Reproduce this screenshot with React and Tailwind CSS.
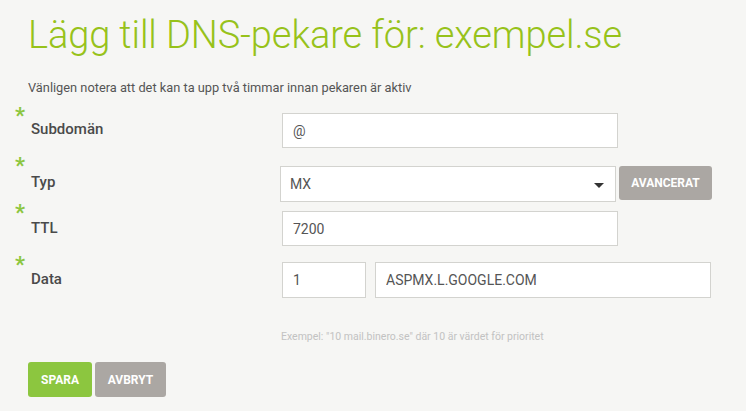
import { useState } from 'react'

const font = { fontFamily: 'Roboto, "Noto Sans", sans-serif' }

function Star() {
  return <div className="h-[9px] text-[22px] leading-[18px] font-bold text-[#8cc63f]">*</div>
}

function FieldRow({ label, top, labelTop, controlTop, children }) {
  return (
    <div className="flex items-start" style={{ marginTop: top }}>
      <div className="w-[267px] shrink-0">
        <Star />
        <div
          className="pl-[16px] text-[15px] leading-[20px] font-medium text-[#4a4a4a]"
          style={{ marginTop: labelTop }}
        >
          {label}
        </div>
      </div>
      <div className="flex items-start gap-[9px]" style={{ marginTop: controlTop }}>
        {children}
      </div>
    </div>
  )
}

const inputCls =
  'h-[35px] border border-[#d3d3cf] bg-white px-[10px] text-[14px] text-[#555] outline-none'

export default function App() {
  const [sub, setSub] = useState('@')
  const [ttl, setTtl] = useState('7200')
  const [prio, setPrio] = useState('1')
  const [data, setData] = useState('ASPMX.L.GOOGLE.COM')

  return (
    <div className="min-h-[411px] w-[746px] bg-[#f6f6f4] pl-[15px] pt-[13px]" style={font}>
      <h1 className="pl-[13px] text-[38px] leading-[44px] font-light tracking-[-0.1px] text-[#97c21a]">
        Lägg till DNS-pekare för: exempel.se
      </h1>
      <p className="mt-[23px] pl-[13px] text-[12.8px] leading-[16px] text-[#555]">
        Vänligen notera att det kan ta upp två timmar innan pekaren är aktiv
      </p>

      <FieldRow label="Subdomän" top={11} labelTop={3} controlTop={6}>
        <input className={`${inputCls} w-[336px]`} value={sub} onChange={(e) => setSub(e.target.value)} />
      </FieldRow>

      <FieldRow label="Typ" top={9} labelTop={6} controlTop={9}>
        <div className="relative -ml-[2px] flex h-[36px] w-[336px] items-center border border-[#d3d3cf] bg-white px-[9px] text-[14px] text-[#555]">
          MX
          <span className="absolute right-[11px] top-[16px] h-0 w-0 border-x-[5px] border-t-[5px] border-x-transparent border-t-[#333]" />
        </div>
        <button className="-ml-[6px] h-[34px] w-[93px] rounded-[3px] bg-[#aba7a3] text-[12px] font-bold text-white">
          AVANCERAT
        </button>
      </FieldRow>

      <FieldRow label="TTL" top={2} labelTop={5} controlTop={7}>
        <input className={`${inputCls} w-[336px]`} value={ttl} onChange={(e) => setTtl(e.target.value)} />
      </FieldRow>

      <FieldRow label="Data" top={10} labelTop={4} controlTop={6}>
        <input className={`${inputCls} h-[36px] w-[84px]`} value={prio} onChange={(e) => setPrio(e.target.value)} />
        <input className={`${inputCls} h-[36px] w-[336px]`} value={data} onChange={(e) => setData(e.target.value)} />
      </FieldRow>

      <p className="mt-[31px] pl-[266px] text-[10.5px] leading-[15px] text-[#c2c2c2]">
        Exempel: "10 mail.binero.se" där 10 är värdet för prioritet
      </p>

      <div className="mt-[18px] flex gap-[3px] pl-[13px]">
        <button className="h-[35px] w-[64px] rounded-[3px] bg-[#8cc63f] text-[12px] font-bold text-white">SPARA</button>
        <button className="h-[35px] w-[71px] rounded-[3px] bg-[#aba7a3] text-[12px] font-bold text-white">AVBRYT</button>
      </div>
    </div>
  )
}
